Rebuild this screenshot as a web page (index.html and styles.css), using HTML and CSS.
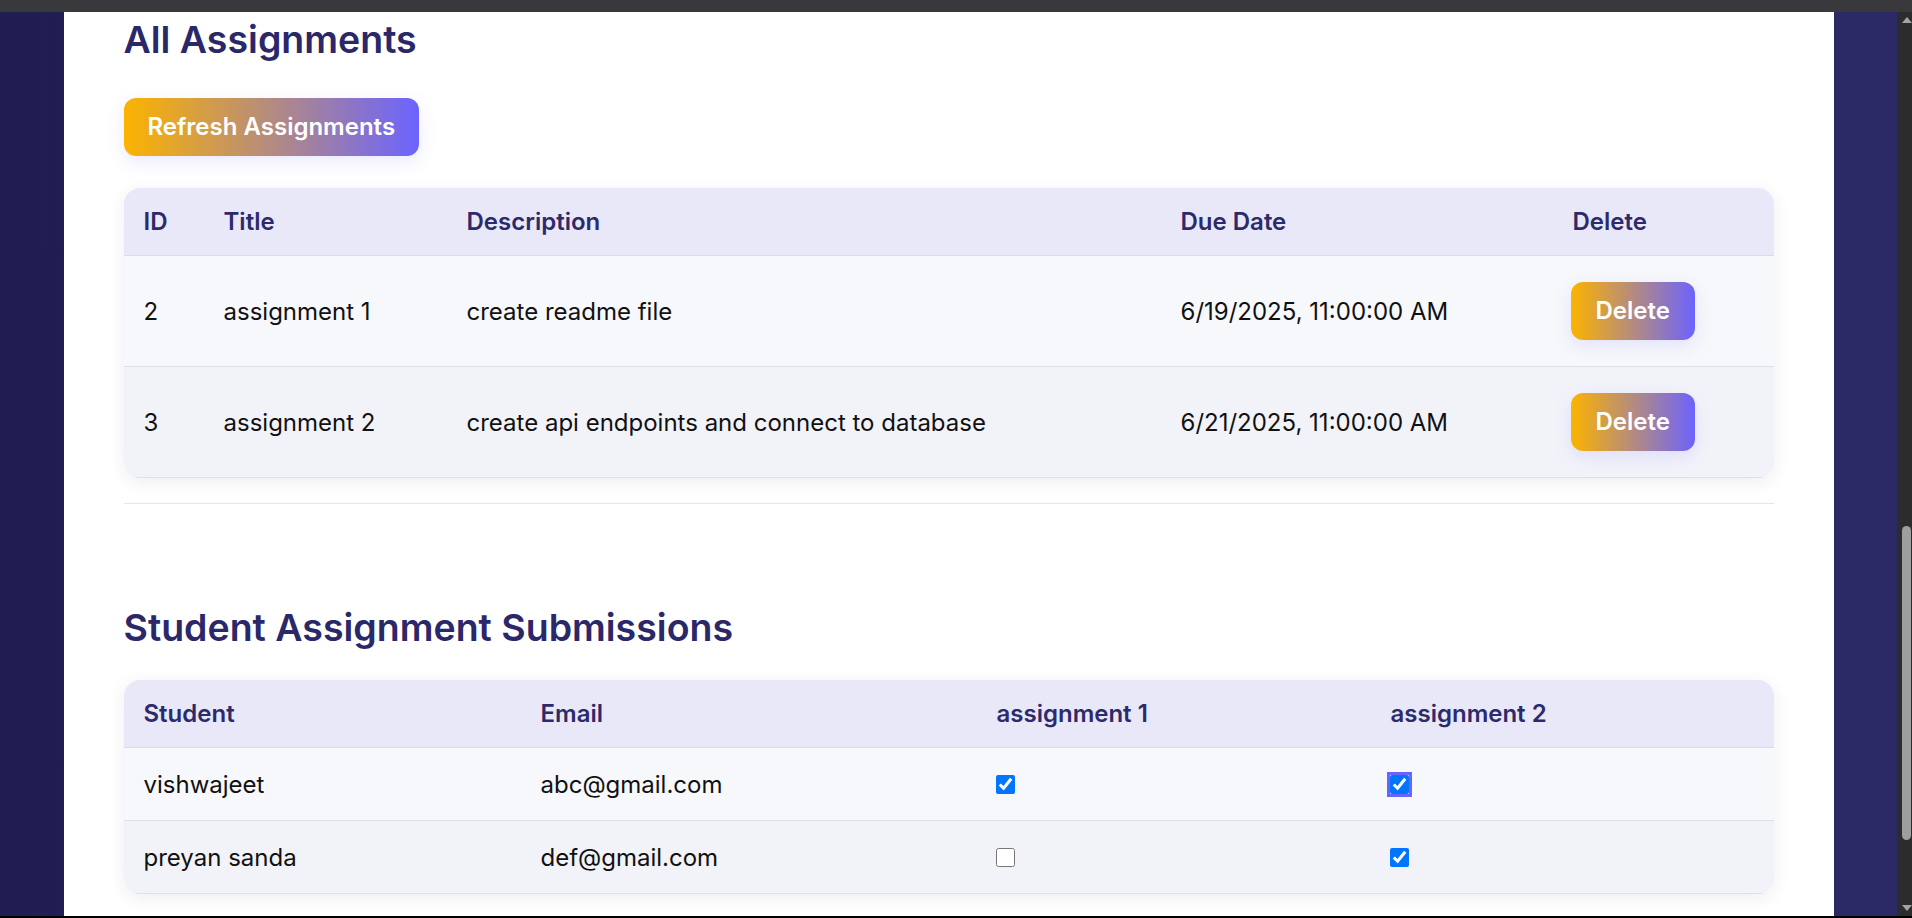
FILE: index.html
```html
<!DOCTYPE html>
<html lang="en">
<head>
<meta charset="utf-8">
<title>Assignments</title>
<link rel="stylesheet" href="styles.css">
</head>
<body>
<div class="topbar"></div>
<div class="window">
  <div class="stage">
    <main class="card">
      <section class="section">
        <h2 class="title">All Assignments</h2>
        <button class="btn btn-refresh" type="button">Refresh Assignments</button>
        <div class="table-wrap">
          <table class="data assignments">
            <colgroup>
              <col class="c-id"><col class="c-title"><col class="c-desc"><col class="c-due"><col class="c-del">
            </colgroup>
            <thead>
              <tr><th>ID</th><th>Title</th><th>Description</th><th>Due Date</th><th>Delete</th></tr>
            </thead>
            <tbody>
              <tr>
                <td>2</td><td>assignment 1</td><td>create readme file</td><td>6/19/2025, 11:00:00 AM</td>
                <td class="cell-action"><button class="btn btn-delete" type="button">Delete</button></td>
              </tr>
              <tr>
                <td>3</td><td>assignment 2</td><td>create api endpoints and connect to database</td><td>6/21/2025, 11:00:00 AM</td>
                <td class="cell-action"><button class="btn btn-delete" type="button">Delete</button></td>
              </tr>
            </tbody>
          </table>
        </div>
      </section>
      <hr class="divider">
      <section class="section section-sub">
        <h2 class="title">Student Assignment Submissions</h2>
        <div class="table-wrap table-wrap-sub">
          <table class="data submissions">
            <colgroup>
              <col class="c-student"><col class="c-email"><col class="c-a1"><col class="c-a2">
            </colgroup>
            <thead>
              <tr><th>Student</th><th>Email</th><th>assignment 1</th><th>assignment 2</th></tr>
            </thead>
            <tbody>
              <tr>
                <td>vishwajeet</td><td>abc@gmail.com</td>
                <td class="cell-check"><input class="check" type="checkbox" checked></td>
                <td class="cell-check"><input class="check check-focus" type="checkbox" checked></td>
              </tr>
              <tr>
                <td>preyan sanda</td><td>def@gmail.com</td>
                <td class="cell-check"><input class="check" type="checkbox"></td>
                <td class="cell-check"><input class="check" type="checkbox" checked></td>
              </tr>
            </tbody>
          </table>
        </div>
      </section>
    </main>
  </div>
  <div class="scrollbar">
    <div class="sb-up"></div>
    <div class="sb-thumb"></div>
    <div class="sb-down"></div>
  </div>
</div>
<div class="bottomline"></div>
</body>
</html>
```

FILE: styles.css
```css
html, body {
  margin: 0;
  padding: 0;
}

body {
  width: 1912px;
  height: 918px;
  overflow: hidden;
  display: flex;
  flex-direction: column;
  font-family: Inter, "Noto Sans", "Liberation Sans", sans-serif;
  background: #000;
}

.topbar {
  flex: none;
  height: 12px;
  background: #39383d;
}

.window {
  flex: 1;
  display: flex;
  min-height: 0;
}

.stage {
  flex: 1;
  display: flex;
  justify-content: center;
  overflow: hidden;
  background: linear-gradient(90deg, #1f1d52 0%, #262461 50%, #2b2966 100%);
}

.card {
  width: 1770px;
  flex: none;
  box-sizing: border-box;
  background: #ffffff;
  padding: 5px 60px 0;
}

.title {
  margin: 0;
  font-size: 37.5px;
  line-height: 46px;
  font-weight: 600;
  color: #2b2869;
}

.btn {
  display: block;
  border: none;
  cursor: pointer;
  font-family: inherit;
  font-size: 24px;
  font-weight: 600;
  color: #ffffff;
  height: 58px;
  line-height: 58px;
  border-radius: 12px;
  background: linear-gradient(90deg, #fcb300 0%, #6c63ff 100%);
  box-shadow: 0 6px 18px rgba(108, 99, 255, 0.14);
}

.btn-refresh {
  margin-top: 35px;
  padding: 0 24px;
}

.btn-delete {
  padding: 0 25px;
}

.table-wrap {
  margin-top: 32px;
  border-radius: 16px;
  overflow: hidden;
  box-shadow: 0 4px 18px rgba(40, 40, 90, 0.08);
}

.table-wrap-sub {
  margin-top: 29px;
}

.data {
  width: 100%;
  table-layout: fixed;
  border-collapse: separate;
  border-spacing: 0;
  font-size: 24px;
}

.data th {
  box-sizing: border-box;
  height: 68px;
  padding: 0 20px;
  text-align: left;
  font-weight: 600;
  color: #2d2a6b;
  background: #e8e8f9;
  border-bottom: 1px solid #dcdce6;
}

.data td {
  box-sizing: border-box;
  padding: 0 20px;
  color: #111111;
  border-bottom: 1px solid #dfdfe6;
  vertical-align: middle;
}

.data td.cell-action {
  padding-left: 18px;
}

.data td.cell-check {
  padding-left: 19px;
}

.data tbody tr:nth-child(odd) td {
  background: #f7f8fb;
}

.data tbody tr:nth-child(even) td {
  background: #f2f3f9;
}

.assignments td {
  height: 111px;
}

.submissions td {
  height: 73px;
}

.c-id { width: 80px; }
.c-title { width: 243px; }
.c-desc { width: 714px; }
.c-due { width: 392px; }
.c-del { width: 221px; }

.c-student { width: 397px; }
.c-email { width: 456px; }
.c-a1 { width: 394px; }
.c-a2 { width: 403px; }

.check {
  display: block;
  width: 19px;
  height: 19px;
  margin: 0;
}

.check-focus {
  outline: 3px solid #6c63ff;
  outline-offset: 0;
}

.divider {
  margin: 25px 0 0;
  border: none;
  height: 1px;
  background: #e6e6eb;
}

.section-sub {
  margin-top: 101px;
}

.scrollbar {
  flex: none;
  width: 15px;
  box-sizing: border-box;
  padding-left: 5px;
  background: #2c2c2c;
  display: flex;
  flex-direction: column;
  align-items: flex-start;
}

.sb-up {
  margin-top: 5px;
  width: 0;
  height: 0;
  border-left: 5px solid transparent;
  border-right: 5px solid transparent;
  border-bottom: 6px solid #a3a3a3;
}

.sb-thumb {
  margin-top: 503px;
  width: 9px;
  height: 314px;
  border-radius: 5px;
  background: #9e9e9e;
}

.sb-down {
  margin-top: auto;
  margin-bottom: 5px;
  width: 0;
  height: 0;
  border-left: 5px solid transparent;
  border-right: 5px solid transparent;
  border-top: 6px solid #a3a3a3;
}

.bottomline {
  flex: none;
  height: 2px;
  background: #000;
}
```
